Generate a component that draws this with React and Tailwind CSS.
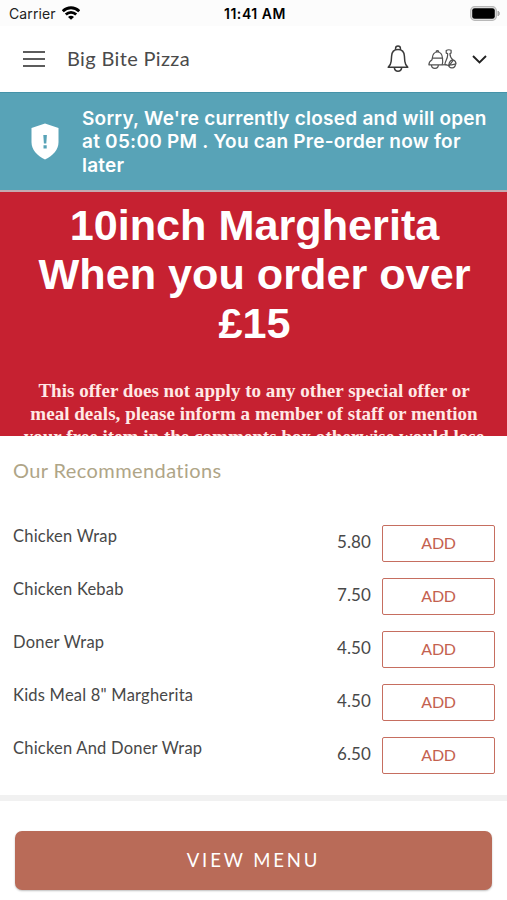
const ITEMS = [
  { name: "Chicken Wrap", price: "5.80" },
  { name: "Chicken Kebab", price: "7.50" },
  { name: "Doner Wrap", price: "4.50" },
  { name: 'Kids Meal 8" Margherita', price: "4.50" },
  { name: "Chicken And Doner Wrap", price: "6.50" },
];

function WifiIcon() {
  return (
    <svg width="18" height="14" viewBox="0 0 18 14" fill="none" stroke="#000" strokeWidth="2.8">
      <path d="M.8 5.2C5.5.6 12.5.6 17.2 5.2" />
      <path d="M3.8 8.6c3-2.9 7.4-2.9 10.4 0" />
      <path d="M9 13.8 6 10.9c1.7-1.5 4.3-1.5 6 0z" fill="#000" stroke="none" />
    </svg>
  );
}

function BatteryIcon() {
  return (
    <svg width="31" height="15" viewBox="0 0 31 15">
      <rect x=".7" y=".7" width="25.6" height="13.6" rx="4" fill="#e8e8e8" stroke="#b8b8b8" strokeWidth="1.3" />
      <rect x="2.2" y="2.2" width="22.6" height="10.6" rx="2.4" fill="#000" />
      <path d="M28 5c1.8.8 1.8 4.2 0 5z" fill="#aaa" stroke="#aaa" />
    </svg>
  );
}

function BellIcon() {
  return (
    <svg width="22" height="29" viewBox="0 0 22 29" fill="none" stroke="#3a3a3a" strokeWidth="1.5" strokeLinejoin="round">
      <path d="M8.6 5V3.3C8.6 1.9 9.5 1 11 1s2.4.9 2.4 2.3V5" />
      <path d="M11 4.4C6.6 4.4 4.8 7.300 4.600 11l-.4 5.200c-.2 3-1.200 4.200-3 6.100h19.600c-1.800-1.900-2.800-3.100-3-6.100l-.4-5.200c-.2-3.700-2-6.600-6.400-6.600z" />
      <path d="M7.300 22.600c.4 2.600 1.700 3.700 3.700 3.700s3.300-1.100 3.700-3.700" />
    </svg>
  );
}

function ScooterIcon() {
  return (
    <svg width="29" height="21" viewBox="0 0 29 21" fill="none" stroke="#505050" strokeWidth="1.200" strokeLinejoin="round">
      {/* delivery box and seat */}
      <path d="M4.300 9.200c.3-4 2.100-6.200 5.100-6.200s4.800 2.200 5.100 6.200zM8 3.200c0-2 2.800-2 2.800 0" />
      <path d="M4.500 9.200 3.800 11C1.800 12.200.9 13.800.9 15.800h13.300c.6-2.200.6-4.300.3-6.600" />
      {/* rear wheel and footboard */}
      <path d="M3.500 15.900a3.400 3.400 0 0 0 6.800 0" />
      <path d="M14.200 15.800h4.400" />
      {/* steering column */}
      <path d="M18.200 1.600c1.500-1 3.400-1 4.900-.4v2.900l-1.200.4c0 3 1.300 5 3.200 6.800l-3.900 5.400-4.200-1.200c-.6-3.200 3.300-5.500 2.600-10.900l-1.400-.5z" />
      {/* front wheel */}
      <path d="M20.800 15.800c.5-3.600 2.400-5.100 4.500-4.600 1.800.5 2.600 1.900 2.700 3.700l-4.300 1z" />
      <path d="M20.600 16.200c.7 3.800 6.600 3.600 6.900-1.100" />
    </svg>
  );
}

function StatusBar() {
  return (
    <div className="grid h-[26px] grid-cols-3 items-center bg-[#fcfcfc] pl-[9px] pr-[6px] text-[14px] text-black">
      <div className="flex items-center gap-[6px]">
        <span className="text-[#222] tracking-[0.1px]">Carrier</span>
        <WifiIcon />
      </div>
      <span className="text-center font-semibold tracking-[0.55px]">11:41 AM</span>
      <div className="flex justify-end"><BatteryIcon /></div>
    </div>
  );
}

function Header() {
  return (
    <header className="flex h-[66px] items-center bg-white pl-[23px] pr-[20px] font-['Lato',sans-serif]">
      <button className="flex w-[22px] flex-col gap-[5px]">
        <span className="h-[2px] bg-[#5c5c5c]" />
        <span className="h-[2px] bg-[#5c5c5c]" />
        <span className="h-[2px] bg-[#5c5c5c]" />
      </button>
      <h1 className="ml-[22px] flex-1 pb-[3px] text-[20px] tracking-[0.35px] text-[#4a4a4a]">Big Bite Pizza</h1>
      <BellIcon />
      <div className="ml-[19px]"><ScooterIcon /></div>
      <svg className="ml-[15px]" width="15" height="9" viewBox="0 0 15 9" fill="none" stroke="#222" strokeWidth="1.9">
        <path d="m1 1 6.500 6.500L14 1" />
      </svg>
    </header>
  );
}

function ClosedNotice() {
  return (
    <div className="flex h-[98px] items-center border-t border-[#4593a9] bg-[#58a3b7] pl-[31px]">
      <svg width="28" height="37" viewBox="0 0 28 37">
        <path d="M14 .5 27.500 5v14c0 8-5.500 13.500-13.500 17.500C6 32.500.5 27 .5 19V5z" fill="#fff" />
        <path d="M12.300 12h3.600l-.6 8.500h-2.400zM12.500 22.300h3.200v3.200h-3.200z" fill="#58a3b7" />
      </svg>
      <p className="ml-[23px] whitespace-nowrap pt-px text-[19px] font-semibold leading-[23.5px] tracking-[0.24px] text-white">
        Sorry, We're currently closed and will open<br />
        at 05:00 PM . You can Pre-order now for<br />
        later
      </p>
    </div>
  );
}

function OfferBanner() {
  return (
    <section className="h-[246px] overflow-hidden border-t-2 border-[#c5aab0] bg-[#c62131] text-center text-white">
      <h2 className="mt-[9px] whitespace-nowrap pl-[2px] font-['Liberation_Sans',Arial,sans-serif] text-[43.2px] font-bold leading-[49px]">
        10inch Margherita<br />
        When you order over<br />
        £15
      </h2>
      <p className="mt-[32px] whitespace-nowrap pl-px font-['Liberation_Serif',serif] text-[19px] font-bold leading-[22.8px] tracking-[0.03px] text-[#ffe9e6]">
        This offer does not apply to any other special offer or<br />
        meal deals, please inform a member of staff or mention<br />
        your free item in the comments box otherwise would lose
      </p>
    </section>
  );
}

function Recommendations() {
  return (
    <section className="h-[359px] pl-[13px] pr-[12px] font-['Lato',sans-serif]">
      <h3 className="pt-[19px] text-[20px] leading-[30px] tracking-[0.4px] text-[#afa587]">Our Recommendations</h3>
      <ul className="mt-[40px] flex flex-col gap-4">
        {ITEMS.map((item) => (
          <li key={item.name} className="flex h-[37px] items-center text-[#484848]">
            <span className="flex-1 self-start text-[16.5px] leading-[23px] tracking-[0.22px]">{item.name}</span>
            <span className="pb-[3px] text-[17px] tracking-[0.1px]">{item.price}</span>
            <button className="ml-[11px] h-[37px] w-[113px] rounded-[2px] border border-[#c66e60] pb-[2px] text-[16px] tracking-[-0.3px] text-[#c4614f]">ADD</button>
          </li>
        ))}
      </ul>
    </section>
  );
}

export default function App() {
  return (
    <main className="flex h-[900px] w-[507px] flex-col overflow-hidden bg-white font-['Inter',sans-serif]">
      <StatusBar />
      <Header />
      <ClosedNotice />
      <OfferBanner />
      <Recommendations />
      <footer className="flex-1 border-t-[6px] border-[#f1f1f1] px-[15px] pt-[30px] font-['Lato',sans-serif]">
        <button className="h-[59px] w-full rounded-[7px] bg-[#b96b58] text-[18.5px] tracking-[2.9px] text-white shadow-[0_1px_2px_rgba(0,0,0,0.25)]">
          VIEW MENU
        </button>
      </footer>
    </main>
  );
}
